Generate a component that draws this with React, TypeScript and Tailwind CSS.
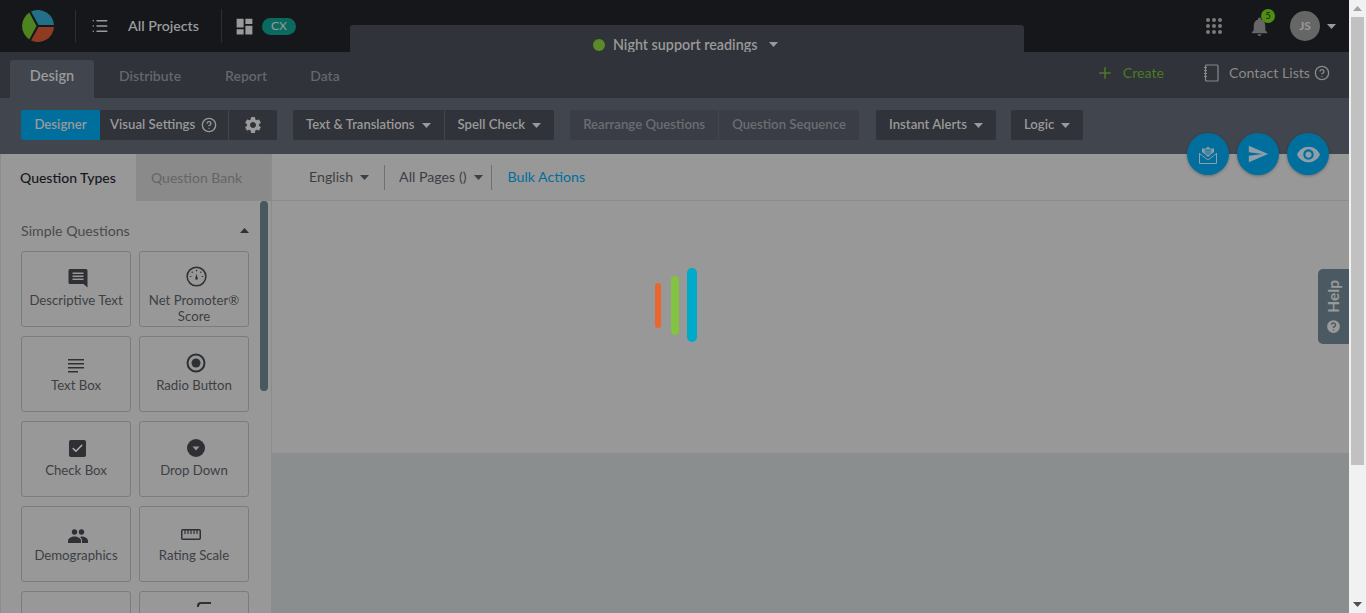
import { ReactNode } from 'react'
import { Check, CircleHelp, List, Plus } from 'lucide-react'
import { MdDashboard, MdNotifications, MdRemoveRedEye, MdSend, MdSettings } from 'react-icons/md'

const Caret = ({ className = '' }: { className?: string }) => (
  <svg width="9" height="5" viewBox="0 0 9 5" className={className}>
    <path d="M0 0h9L4.5 5z" fill="currentColor" />
  </svg>
)

const Logo = () => (
  <svg width="32" height="32" viewBox="0 0 32 32">
    <path d="M9 1.600L16.500 15H32A16 16 0 0 0 9 1.600z" fill="#217087" />
    <path d="M32 17H16.500L9 30.400A16 16 0 0 0 32 17z" fill="#8f3a22" />
    <path d="M7.300 2.600L14.500 16L7.300 29.400A16 16 0 0 1 7.300 2.600z" fill="#4e8420" />
  </svg>
)

const icons: Record<string, ReactNode> = {
  descriptive: (
    <svg width="20" height="19" viewBox="0 0 20 19">
      <path d="M2 0h16a1.500 1.500 0 0 1 1.500 1.500V18.500L15.500 15H2a1.500 1.500 0 0 1-1.500-1.500v-12A1.500 1.500 0 0 1 2 0z" fill="#2e3034" />
      <path d="M4.500 3.500h11v1.500h-11zM4.500 6.500h11v1.500h-11zM4.500 9.500h11v1.500h-11z" fill="#989898" />
    </svg>
  ),
  nps: (
    <svg width="21" height="21" viewBox="0 0 22 22" fill="none" stroke="#2e3034">
      <circle cx="11" cy="11" r="9.800" strokeWidth="1.600" />
      <path d="M11 4v1.500M6 6l1 1M16 6l-1 1M4 11h1.500M16.500 11H18" strokeWidth="1.200" />
      <path d="M11 8l1.300 5a1.300 1.300 0 0 1-2.600 0z" fill="#2e3034" stroke="none" />
    </svg>
  ),
  textbox: (
    <svg width="16" height="14" viewBox="0 0 16 14" fill="#2e3034">
      <path d="M0 0h16v1.500H0zM0 4h16v1.500H0zM0 8h16v1.500H0zM0 12h10v1.500H0z" />
    </svg>
  ),
  radio: (
    <svg width="20" height="20" viewBox="0 0 20 20">
      <circle cx="10" cy="10" r="8.500" fill="none" stroke="#2e3034" strokeWidth="2" />
      <circle cx="10" cy="10" r="4.500" fill="#2e3034" />
    </svg>
  ),
  check: (
    <div className="flex h-[17px] w-[17px] items-center justify-center rounded-[2px] bg-[#2e3034]">
      <Check size={13} strokeWidth={2.5} className="text-[#b5b5b5]" />
    </div>
  ),
  dropdown: (
    <svg width="18" height="18" viewBox="0 0 18 18">
      <circle cx="9" cy="9" r="9" fill="#2e3034" />
      <path d="M5.500 7.500h7L9 11.500z" fill="#989898" />
    </svg>
  ),
  demographics: (
    <svg width="20" height="14" viewBox="0 0 20 14" fill="#2e3034">
      <circle cx="6.500" cy="3" r="2.700" />
      <circle cx="13.500" cy="3" r="2.700" />
      <path d="M0 14v-2.200C0 9.200 3.500 7.400 6.500 7.400s6.500 1.800 6.500 4.400V14z" />
      <path d="M14 14v-2.200c0-1.600-.8-3-2-3.800.6-.3 1.100-.6 1.800-.6 2.900 0 6.200 1.800 6.200 4.400V14z" />
    </svg>
  ),
  rating: (
    <svg width="20" height="11" viewBox="0 0 20 11" fill="none" stroke="#2e3034">
      <rect x="0.750" y="0.750" width="18.500" height="9.500" rx="1" strokeWidth="1.500" />
      <path d="M4 1v4M7 1v4M10 1v4M13 1v4M16 1v4" strokeWidth="1.200" />
    </svg>
  ),
}

const questionTypes = [
  { label: 'Descriptive Text', icon: 'descriptive', wrap: 'ml-[4px]' },
  { label: 'Net Promoter® Score', icon: 'nps', wrap: 'ml-[4px] mb-[1px]' },
  { label: 'Text Box', icon: 'textbox', wrap: '' },
  { label: 'Radio Button', icon: 'radio', wrap: 'ml-[4px]' },
  { label: 'Check Box', icon: 'check', wrap: 'ml-[2px] mb-[1px]' },
  { label: 'Drop Down', icon: 'dropdown', wrap: 'ml-[4px] mb-[1px]' },
  { label: 'Demographics', icon: 'demographics', wrap: 'ml-[4px]' },
  { label: 'Rating Scale', icon: 'rating', wrap: 'mr-[6px] mb-[3px]' },
]

const ToolButton = ({ label, caret, dim, small }: { label: string; caret?: boolean; dim?: boolean; small?: boolean }) => (
  <div className={`flex h-[30px] items-center px-[13px] ${dim ? 'text-[#6a6d73]' : 'text-[#9a9a9a]'}`}>
    <span className={small ? 'text-[13px] font-semibold' : 'font-semibold'}>{label}</span>
    {caret && <Caret className="ml-[7px]" />}
  </div>
)

export default function App() {
  return (
    <div className="flex h-[613px] w-[1366px] overflow-hidden bg-[#989898] font-['Lato','Liberation_Sans',sans-serif] text-[13px]">
      <div className="relative flex w-[1349px] flex-col">
        {/* top bar */}
        <div className="flex h-[52px] shrink-0 items-start bg-[#15171b]">
          <div className="flex h-[52px] w-[350px] shrink-0 items-center">
            <div className="ml-[22px]"><Logo /></div>
            <div className="ml-[21px] h-[32px] w-px bg-[#2c2e33]" />
            <List size={18} strokeWidth={2} className="ml-[15px] text-[#9a9a9a]" />
            <span className="ml-[19px] text-[14.2px] font-semibold text-[#9a9a9a]">All Projects</span>
            <div className="ml-[22px] h-[34px] w-px bg-[#2c2e33]" />
            <MdDashboard size={21} className="ml-[12px] text-[#9a9a9a]" />
            <span className="ml-[7px] flex h-[17px] w-[34px] items-center justify-center rounded-full bg-[#0b6a60] text-[12px] text-[#9a9a9a]">CX</span>
          </div>
          <div className="mt-[25px] flex h-[27px] w-[674px] shrink-0 items-center rounded-t-[3px] bg-[#303339] pt-[12px]">
            <div className="ml-[243px] h-[12px] w-[12px] rounded-full bg-[#5b8a28]" />
            <span className="ml-[8px] text-[14.300px] font-semibold text-[#9a9a9a]">Night support readings</span>
            <Caret className="ml-[12px] text-[#9a9a9a]" />
          </div>
          <div className="flex h-[52px] flex-1 items-center">
            <div className="ml-[182px] grid grid-cols-3 gap-[2px]">
              {Array.from({ length: 9 }).map((_, i) => (
                <div key={i} className="h-[4px] w-[4px] rounded-full bg-[#7a7a7a]" />
              ))}
            </div>
            <div className="relative ml-[26px]">
              <MdNotifications size={23} className="text-[#666]" />
              <span className="absolute -top-[6px] left-[13px] flex h-[14px] w-[14px] items-center justify-center rounded-full bg-[#4f8e12] text-[9px] text-[#15171b]">5</span>
            </div>
            <div className="ml-[19px] flex h-[30px] w-[30px] items-center justify-center rounded-full bg-[#666] text-[12px] font-bold text-[#999]">JS</div>
            <Caret className="ml-[7px] text-[#9a9a9a]" />
          </div>
        </div>

        {/* tabs */}
        <div className="flex h-[46px] shrink-0 items-end bg-[#303339]">
          <div className="ml-[10px] flex h-[38px] w-[84px] items-center justify-center rounded-t-[3px] bg-[#41454e] pb-[7px] text-[14.500px] font-semibold text-[#9a9a9a]">Design</div>
          <div className="flex h-[38px] items-center pb-[7px] text-[14px] font-semibold text-[#64676d]">
            <span className="ml-[25px]">Distribute</span>
            <span className="ml-[44px]">Report</span>
            <span className="ml-[43px]">Data</span>
          </div>
          <div className="ml-auto flex h-[46px] items-center pb-[5px] text-[14.200px]">
            <Plus size={18} className="text-[#4c7a24]" />
            <span className="ml-[9px] text-[#4c7a24]">Create</span>
            <svg width="16" height="18" viewBox="0 0 16 18" fill="none" stroke="#8a8a8a" strokeWidth="1.200" className="ml-[39px]">
              <rect x="2.500" y="1" width="12.500" height="16" rx="1" />
              <path d="M1 3.500h3M1 6.500h3M1 9.500h3M1 12.500h3" />
            </svg>
            <span className="ml-[10px] text-[#8a8a8a]">Contact Lists</span>
            <CircleHelp size={16} className="ml-[4px] mr-[19px] text-[#8a8a8a]" />
          </div>
        </div>

        {/* toolbar */}
        <div className="flex h-[56px] shrink-0 items-start bg-[#41454e] pt-[12px] text-[13.200px]">
          <div className="ml-[21px] flex h-[30px] items-center rounded-[2px] bg-[#303339] text-[#9a9a9a]">
            <div className="flex h-[30px] w-[79px] items-center justify-center rounded-l-[2px] bg-[#016f9d] font-semibold">Designer</div>
            <div className="flex h-[30px] w-[129px] items-center border-r border-[#41454e] pl-[10px] font-semibold">
              Visual Settings
              <CircleHelp size={16} className="ml-[6px]" />
            </div>
            <div className="flex w-[48px] items-center justify-center"><MdSettings size={20} /></div>
          </div>
          <div className="ml-[16px] flex rounded-[2px] bg-[#303339]">
            <div className="border-r border-[#41454e]"><ToolButton label="Text &amp; Translations" caret small /></div>
            <ToolButton label="Spell Check" caret />
          </div>
          <div className="ml-[16px] flex rounded-[2px] bg-[#3a3d45]">
            <div className="border-r border-[#41454e]"><ToolButton label="Rearrange Questions" dim /></div>
            <ToolButton label="Question Sequence" dim />
          </div>
          <div className="ml-[17px] rounded-[2px] bg-[#303339]"><ToolButton label="Instant Alerts" caret /></div>
          <div className="ml-[15px] rounded-[2px] bg-[#303339]"><ToolButton label="Logic" caret /></div>
        </div>

        {/* main */}
        <div className="flex min-h-0 flex-1">
          <aside className="flex w-[272px] shrink-0 flex-col overflow-hidden border-x border-[#8c8c8c] bg-[#989898]">
            <div className="flex h-[47px] shrink-0 text-[14px]">
              <div className="flex w-[135px] items-center pb-[1px] pl-[19px] font-medium text-[#15171b]">Question Types</div>
              <div className="flex flex-1 items-center bg-[#8a8a8a] pl-[15px] text-[#656565]">Question Bank</div>
            </div>
            <div className="relative min-h-0 flex-1 pl-[20px]">
              <div className="absolute left-[259px] top-0 h-[190px] w-[8px] rounded-full bg-[#49575f]" />
              <div className="flex h-[50px] w-[228px] items-center justify-between pt-[9px] text-[#4a4a4a]">
                <span className="text-[14.200px]">Simple Questions</span>
                <Caret className="rotate-180 text-[#2e3034]" />
              </div>
              <div className="grid w-[228px] grid-cols-[110px_110px] gap-x-[8px] gap-y-[9px] text-[13.200px]">
                {questionTypes.map((q) => (
                  <div key={q.label} className="flex h-[76px] flex-col items-center rounded-[3px] border border-[#7c7c7c] text-center leading-[16px] text-[#3d3f44]">
                    <div className="flex h-[36px] shrink-0 items-end justify-center">
                      <div className={q.wrap}>{icons[q.icon]}</div>
                    </div>
                    <div className="mt-[4px]">{q.label}</div>
                  </div>
                ))}
                <div className="h-[76px] rounded-[3px] border border-[#7c7c7c]" />
                <div className="relative h-[76px] rounded-[3px] border border-[#7c7c7c]">
                  <div className="absolute left-[57px] top-[10px] h-[5px] w-[14px] rounded-tl-[4px] border-l-2 border-t-2 border-[#2e3034]" />
                </div>
              </div>
            </div>
            <div className="h-[7px] shrink-0 bg-[#989898]" />
          </aside>

          <div className="flex min-w-0 flex-1 flex-col">
            <div className="flex h-[47px] shrink-0 items-center border-b border-[#8c8c8c] text-[14.200px] text-[#3d3f44]">
              <span className="ml-[37px]">English</span>
              <Caret className="ml-[7px]" />
              <div className="ml-[15px] h-[25px] w-px bg-[#707070]" />
              <span className="ml-[14px]">All Pages ()</span>
              <Caret className="ml-[8px]" />
              <div className="ml-[8px] h-[25px] w-px bg-[#707070]" />
              <span className="ml-[15px] text-[#016f9d]">Bulk Actions</span>
            </div>
            <div className="relative flex h-[252px] shrink-0 items-start pl-[383px] pt-[67px]">
              <div className="mt-[15px] h-[45px] w-[6px] rounded-full bg-[#e9662f]" />
              <div className="ml-[10px] mt-[8px] h-[59px] w-[8px] rounded-full bg-[#82c341]" />
              <div className="ml-[8px] h-[74px] w-[10px] rounded-full bg-[#00aac9]" />
            </div>
            <div className="flex-1 bg-[#8a8e8e]" />
          </div>
        </div>

        {/* floating buttons */}
        <div className="absolute left-[1187px] top-[133px] flex gap-[8px] text-[#8f9ea8]">
          <div className="flex h-[42px] w-[42px] items-center justify-center rounded-full bg-[#016f9d] shadow-[0_1px_3px_rgba(0,0,0,0.3)]">
            <svg width="18" height="19" viewBox="0 0 18 19" fill="none">
              <path d="M.5 8v10.500h17V8" stroke="currentColor" />
              <path d="M.5 8.500L9 15l8.500-6.500" stroke="currentColor" />
              <path d="M3 7V3.500h4L9 1.500l2 2h4V7l-6 5z" fill="currentColor" />
              <path d="M5.500 5h7M5.500 7h7M6.500 9h5" stroke="#016f9d" />
            </svg>
          </div>
          <div className="flex h-[42px] w-[42px] items-center justify-center rounded-full bg-[#016f9d] shadow-[0_1px_3px_rgba(0,0,0,0.3)]">
            <MdSend size={22} />
          </div>
          <div className="flex h-[42px] w-[42px] items-center justify-center rounded-full bg-[#016f9d] shadow-[0_1px_3px_rgba(0,0,0,0.3)]">
            <MdRemoveRedEye size={25} />
          </div>
        </div>

        {/* help tab */}
        <div className="absolute right-0 top-[269px] flex h-[75px] w-[31px] flex-col items-center justify-end rounded-l-[5px] bg-[#4b5a62] pb-[9px] text-[#9a9a9a]">
          <span className="mb-[5px] rotate-180 text-[15.500px] font-bold [writing-mode:vertical-rl]">Help</span>
          <CircleHelp size={17} fill="#9a9a9a" stroke="#4b5a62" />
        </div>
      </div>

      {/* browser scrollbar */}
      <div className="flex w-[17px] shrink-0 flex-col bg-[#f1f1f1] px-[2px]">
        <div className="flex h-[17px] shrink-0 items-center justify-center"><Caret className="rotate-180 text-[#a3a3a3]" /></div>
        <div className="h-[448px] shrink-0 bg-[#c1c1c1]" />
        <div className="mt-auto flex h-[17px] shrink-0 items-center justify-center"><Caret className="text-[#505050]" /></div>
      </div>
    </div>
  )
}
